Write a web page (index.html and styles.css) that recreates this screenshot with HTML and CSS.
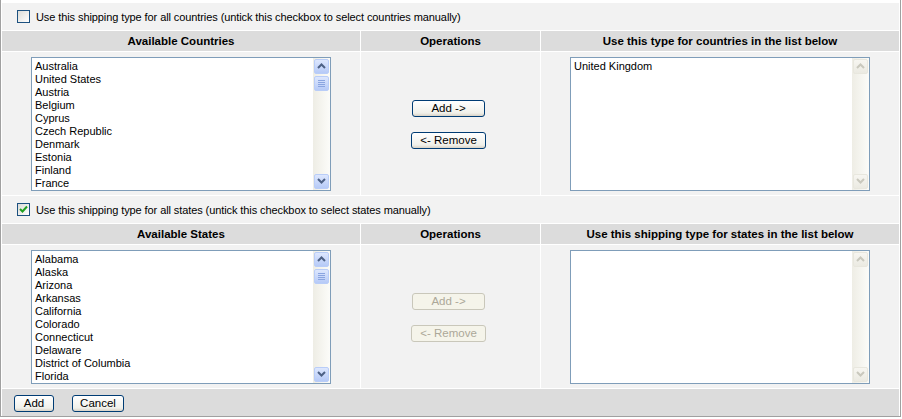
FILE: index.html
```html
<!DOCTYPE html>
<html lang="en">
<head>
    <meta charset="UTF-8">
    <meta name="viewport" content="width=device-width, initial-scale=1.0">
    <title>Shipping Type Regions</title>
    <link rel="stylesheet" href="styles.css">
</head>
<body>
    <div class="panel">
        <!-- countries -->
        <label class="opt-row">
            <span class="check"></span>
            <span>Use this shipping type for all countries (untick this checkbox to select countries manually)</span>
        </label>

        <div class="pick">
            <div class="head">Available Countries</div>
            <div class="head">Operations</div>
            <div class="head">Use this type for countries in the list below</div>

            <div class="cell">
                <div class="listbox">
                    <ul class="items">
                        <li>Australia</li>
                        <li>United States</li>
                        <li>Austria</li>
                        <li>Belgium</li>
                        <li>Cyprus</li>
                        <li>Czech Republic</li>
                        <li>Denmark</li>
                        <li>Estonia</li>
                        <li>Finland</li>
                        <li>France</li>
                    </ul>
                    <div class="scroll">
                        <span class="sb-btn"><svg width="9" height="6" viewBox="0 0 9 6"><path d="M1 5 L4.5 1.5 L8 5" fill="none" stroke="#4d6185" stroke-width="2"/></svg></span>
                        <span class="sb-thumb"><i></i><i></i><i></i><i></i></span>
                        <span class="sb-track"></span>
                        <span class="sb-btn"><svg width="9" height="6" viewBox="0 0 9 6"><path d="M1 1 L4.5 4.5 L8 1" fill="none" stroke="#4d6185" stroke-width="2"/></svg></span>
                    </div>
                </div>
            </div>
            <div class="cell ops">
                <button class="btn btn-add">Add -&gt;</button>
                <button class="btn btn-remove">&lt;- Remove</button>
            </div>
            <div class="cell">
                <div class="listbox">
                    <ul class="items">
                        <li>United Kingdom</li>
                    </ul>
                    <div class="scroll off">
                        <span class="sb-btn"><svg width="9" height="6" viewBox="0 0 9 6"><path d="M1 5 L4.5 1.5 L8 5" fill="none" stroke="#c9c8bd" stroke-width="2"/></svg></span>
                        <span class="sb-track"></span>
                        <span class="sb-btn"><svg width="9" height="6" viewBox="0 0 9 6"><path d="M1 1 L4.5 4.5 L8 1" fill="none" stroke="#c9c8bd" stroke-width="2"/></svg></span>
                    </div>
                </div>
            </div>
        </div>

        <!-- states -->
        <label class="opt-row">
            <span class="check on"><svg width="11" height="11" viewBox="0 0 11 11"><path d="M2 5 L4.5 7.5 L9 2.5" fill="none" stroke="#21a121" stroke-width="2"/></svg></span>
            <span>Use this shipping type for all states (untick this checkbox to select states manually)</span>
        </label>

        <div class="pick">
            <div class="head">Available States</div>
            <div class="head">Operations</div>
            <div class="head">Use this shipping type for states in the list below</div>

            <div class="cell">
                <div class="listbox">
                    <ul class="items">
                        <li>Alabama</li>
                        <li>Alaska</li>
                        <li>Arizona</li>
                        <li>Arkansas</li>
                        <li>California</li>
                        <li>Colorado</li>
                        <li>Connecticut</li>
                        <li>Delaware</li>
                        <li>District of Columbia</li>
                        <li>Florida</li>
                    </ul>
                    <div class="scroll">
                        <span class="sb-btn"><svg width="9" height="6" viewBox="0 0 9 6"><path d="M1 5 L4.5 1.5 L8 5" fill="none" stroke="#4d6185" stroke-width="2"/></svg></span>
                        <span class="sb-thumb"><i></i><i></i><i></i><i></i></span>
                        <span class="sb-track"></span>
                        <span class="sb-btn"><svg width="9" height="6" viewBox="0 0 9 6"><path d="M1 1 L4.5 4.5 L8 1" fill="none" stroke="#4d6185" stroke-width="2"/></svg></span>
                    </div>
                </div>
            </div>
            <div class="cell ops">
                <button class="btn btn-add" disabled>Add -&gt;</button>
                <button class="btn btn-remove" disabled>&lt;- Remove</button>
            </div>
            <div class="cell">
                <div class="listbox">
                    <ul class="items"></ul>
                    <div class="scroll off">
                        <span class="sb-btn"><svg width="9" height="6" viewBox="0 0 9 6"><path d="M1 5 L4.5 1.5 L8 5" fill="none" stroke="#c9c8bd" stroke-width="2"/></svg></span>
                        <span class="sb-track"></span>
                        <span class="sb-btn"><svg width="9" height="6" viewBox="0 0 9 6"><path d="M1 1 L4.5 4.5 L8 1" fill="none" stroke="#c9c8bd" stroke-width="2"/></svg></span>
                    </div>
                </div>
            </div>
        </div>

        <div class="foot">
            <button class="btn btn-ok">Add</button>
            <button class="btn btn-cancel">Cancel</button>
        </div>
    </div>
</body>
</html>
```

FILE: styles.css
```css
body {
    margin: 0;
    font-family: "Liberation Sans", Arial, sans-serif;
    font-size: 11px;
    color: #000;
    background-color: #fff;
}

.panel {
    width: 897px;
    display: flex;
    flex-direction: column;
    gap: 1px;
    padding: 3px 1px 0 1px;
    border: 1px solid #a0a0a0;
    border-top: none;
    background-color: #fff;
}

.opt-row {
    height: 27px;
    display: flex;
    align-items: center;
    gap: 6px;
    padding-left: 15px;
    letter-spacing: -0.09px;
    background-color: #f2f2f2;
}

.check {
    width: 13px;
    height: 13px;
    box-sizing: border-box;
    border: 1px solid #1c5180;
    background: linear-gradient(135deg, #dcdcd7, #fff);
    display: flex;
    align-items: center;
    justify-content: center;
}

.pick {
    display: grid;
    grid-template-columns: 358px 179px 358px;
    gap: 1px;
}

.head {
    height: 20px;
    line-height: 20px;
    text-align: center;
    font-size: 11.5px;
    font-weight: bold;
    background-color: #dcdcdc;
}

.cell {
    height: 143px;
    display: flex;
    align-items: center;
    justify-content: center;
    background-color: #f2f2f2;
}

.ops {
    flex-direction: column;
    gap: 15px;
    padding: 2px 4px 0 0;
    box-sizing: border-box;
}

.listbox {
    width: 300px;
    height: 134px;
    box-sizing: border-box;
    border: 1px solid #7f9db9;
    background-color: #fff;
    display: flex;
}

.items {
    flex: 1;
    list-style: none;
    margin: 0;
    padding: 2px 3px;
}

.items li {
    line-height: 13px;
    white-space: nowrap;
}

.scroll {
    width: 17px;
    display: flex;
    flex-direction: column;
    background: linear-gradient(to right, #eeede5, #fcfcf9);
}

.sb-btn, .sb-thumb {
    width: 15px;
    height: 15px;
    margin: 1px;
    box-sizing: border-box;
    border: 1px solid #b9cdf8;
    border-radius: 2px;
    background: linear-gradient(#dde7fe, #b6caf7);
    display: flex;
    align-items: center;
    justify-content: center;
}

.sb-thumb {
    flex-direction: column;
    gap: 1px;
}

.sb-thumb i {
    width: 7px;
    height: 1px;
    background-color: #8aa5e0;
}

.sb-track {
    flex: 1;
}

.scroll.off .sb-btn {
    border-color: #e8e7de;
    background: linear-gradient(#f7f6f1, #ebeae2);
}

.btn {
    height: 17px;
    padding: 0;
    box-sizing: border-box;
    font-family: inherit;
    font-size: 11.5px;
    color: #000;
    border: 1px solid #003c74;
    border-radius: 3px;
    background: linear-gradient(#fff, #f0f0ea 80%, #d8d2c6);
    line-height: 13px;
}

.btn-add {
    width: 73px;
}

.btn-remove {
    width: 75px;
}

.btn-ok {
    width: 40px;
}

.btn-cancel {
    width: 52px;
}

.btn:disabled {
    color: #aca899;
    border-color: #c9c7ba;
    background: #f5f4ea;
}

.foot {
    height: 27px;
    display: flex;
    align-items: center;
    gap: 18px;
    padding: 1px 0 0 12px;
    box-sizing: border-box;
    background-color: #dcdcdc;
}
```
